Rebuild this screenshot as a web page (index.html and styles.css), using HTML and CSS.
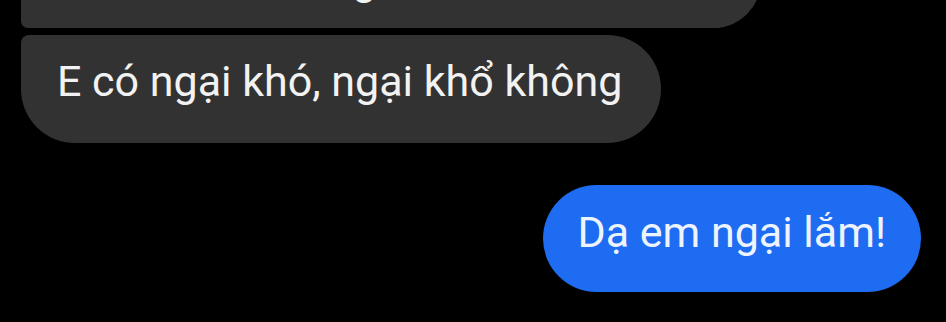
FILE: index.html
```html
<!DOCTYPE html>
<html lang="vi">
<head>
<meta charset="utf-8">
<link rel="stylesheet" href="styles.css">
</head>
<body>
<div class="chat">
  <div class="msg msg-in msg-first">Ở đó anh thường làm thêm lắm đó</div>
  <div class="msg msg-in msg-last">E có ngại khó, ngại khổ không</div>
  <div class="msg msg-out">Dạ em ngại lắm!</div>
</div>
</body>
</html>
```
FILE: styles.css
```css
html, body {
  margin: 0;
  padding: 0;
  background: #000;
  overflow: hidden;
}
.chat {
  width: 946px;
  height: 322px;
  display: flex;
  flex-direction: column;
  font-family: Roboto, "Noto Sans", sans-serif;
  font-size: 43px;
  line-height: 50px;
}
.msg {
  white-space: nowrap;
}
.msg-in {
  align-self: flex-start;
  margin-left: 21px;
  padding: 21px 39px 37px 36px;
  background: #323232;
  color: #f2f2f2;
}
.msg-first {
  margin-top: -67px;
  padding-bottom: 24px;
  padding-right: 50px;
  border-radius: 54px 54px 54px 8px;
}
.msg-last {
  margin-top: 7px;
  border-radius: 8px 54px 54px 54px;
}
.msg-out {
  align-self: flex-end;
  margin-top: 42px;
  margin-right: 25px;
  padding: 22px 35px 35px 35px;
  background: #1e6cf1;
  color: #eef4ff;
  border-radius: 54px;
}
```
